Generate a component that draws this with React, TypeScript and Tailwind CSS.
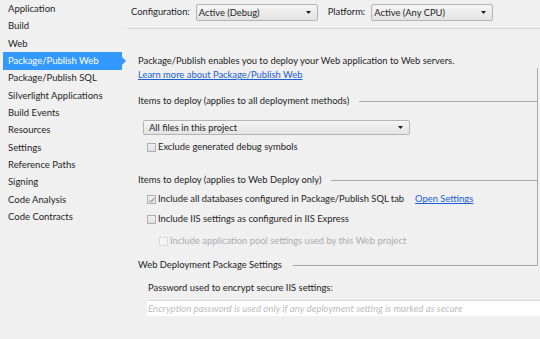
import React from "react";

const navItems = [
  "Application",
  "Build",
  "Web",
  "Package/Publish Web",
  "Package/Publish SQL",
  "Silverlight Applications",
  "Build Events",
  "Resources",
  "Settings",
  "Reference Paths",
  "Signing",
  "Code Analysis",
  "Code Contracts",
];

function Arrow() {
  return (
    <svg width="5" height="3" viewBox="0 0 5 3" className="shrink-0">
      <path d="M0 0 L5 0 L2.5 3 Z" fill="#1e1e1e" />
    </svg>
  );
}

function Select({ value, className }: { value: string; className: string }) {
  return (
    <div
      className={`flex items-center justify-between border border-[#b4b4b4] rounded-[2px] bg-gradient-to-b from-[#f5f5f5] to-[#e3e3e3] pl-[2px] pr-[6px] ${className}`}
    >
      <span className="leading-none">{value}</span>
      <Arrow />
    </div>
  );
}

function Checkbox({ checked, disabled }: { checked?: boolean; disabled?: boolean }) {
  return (
    <span
      className={`w-[9px] h-[9px] shrink-0 border flex items-center justify-center ${
        disabled ? "border-[#dadada] bg-[#f4f4f4]" : "border-[#b0b0b0] bg-gradient-to-b from-[#f2f2f2] to-[#e0e0e0]"
      }`}
    >
      {checked && (
        <svg width="6" height="6" viewBox="0 0 6 6">
          <path d="M0.8 3.2 L2.4 4.8 L5.2 0.8" fill="none" stroke="#666" strokeWidth="0.9" />
        </svg>
      )}
    </span>
  );
}

function GroupHeader({ title, last }: { title: string; last?: boolean }) {
  return (
    <div className="flex items-center h-[17px] pl-[11px]">
      <span className="shrink-0">{title}</span>
      {last ? (
        <div className="flex-1 ml-[11px] h-[9px] self-start border-b border-r border-[#a8a8a8]" />
      ) : (
        <div className="flex-1 ml-[10px] h-px bg-[#a8a8a8]" />
      )}
    </div>
  );
}

export default function App() {
  return (
    <div
      className="w-[540px] h-[339px] bg-[#f0f0f0] flex overflow-hidden text-[9.4px] text-[#1e1e1e]"
      style={{ fontFamily: 'Lato, "Segoe UI", sans-serif' }}
    >
      {/* Left navigation */}
      <nav className="w-[127px] shrink-0 pt-[0.5px] text-[9.5px]">
        {navItems.map((item, i) =>
          i === 3 ? (
            <div key={item} className="relative h-[17.33px] flex items-center">
              <div className="absolute left-[3px] w-[119px] top-[-0.5px] h-[18px] bg-[#3399ff]" />
              <span className="relative pl-[8px] text-white">{item}</span>
              <span className="absolute left-[122px] top-[5px] w-0 h-0 border-y-[4px] border-y-transparent border-l-[4px] border-l-[#3399ff]" />
            </div>
          ) : (
            <div key={item} className="h-[17.33px] flex items-center pl-[8px]">
              {item}
            </div>
          )
        )}
      </nav>

      {/* Content */}
      <main className="flex-1 flex flex-col min-w-0">
        <div className="h-[29px] border-b border-[#d4d4d4] flex items-start pt-[4px] pl-[4px]">
          <span className="h-[17px] flex items-center">Configuration:</span>
          <Select value="Active (Debug)" className="ml-[6px] w-[122px] h-[17px]" />
          <span className="ml-[10px] h-[17px] flex items-center">Platform:</span>
          <Select value="Active (Any CPU)" className="ml-[6px] w-[122px] h-[17px]" />
        </div>

        <div className="pr-[2px]">
          <p className="mt-[25px] pl-[11px] leading-[14px]">
            Package/Publish enables you to deploy your Web application to Web servers.
          </p>
          <div className="border-r border-[#a8a8a8]">
            <a className="block pl-[11px] leading-[14px] text-[#1a5fd0] underline">
              Learn more about Package/Publish Web
            </a>

            <div className="mt-[11px]">
              <GroupHeader title="Items to deploy (applies to all deployment methods)" />
            </div>
            <Select value="All files in this project" className="mt-[10px] ml-[16px] w-[267px] h-[15px] pl-[5px]" />
            <label className="mt-[4px] ml-[20px] h-[17px] flex items-center gap-[2px]">
              <Checkbox />
              <span>Exclude generated debug symbols</span>
            </label>

            <div className="mt-[16px]">
              <GroupHeader title="Items to deploy (applies to Web Deploy only)" />
            </div>
            <label className="mt-[2px] ml-[20px] h-[17px] flex items-center gap-[2px]">
              <Checkbox checked />
              <span>Include all databases configured in Package/Publish SQL tab</span>
              <a className="ml-[9px] text-[#1a5fd0] underline">Open Settings</a>
            </label>
            <label className="mt-[3px] ml-[20px] h-[17px] flex items-center gap-[2px]">
              <Checkbox />
              <span>Include IIS settings as configured in IIS Express</span>
            </label>
            <label className="mt-[5px] ml-[32px] h-[17px] flex items-center gap-[2px] text-[#acacac]">
              <Checkbox disabled />
              <span>Include application pool settings used by this Web project</span>
            </label>
            <div className="h-[7px]" />
          </div>
          <GroupHeader title="Web Deployment Package Settings" last />
        </div>

        <p className="mt-[6px] pl-[21px] h-[17px] flex items-center">Password used to encrypt secure IIS settings:</p>
        <div className="mt-[3px] ml-[20px] h-[16px] bg-white border-t border-[#d8d8d8] flex items-center pl-[1px]">
          <span className="italic text-[9.7px] text-[#bcbcbc]">
            Encryption password is used only if any deployment setting is marked as secure
          </span>
        </div>
      </main>
    </div>
  );
}
